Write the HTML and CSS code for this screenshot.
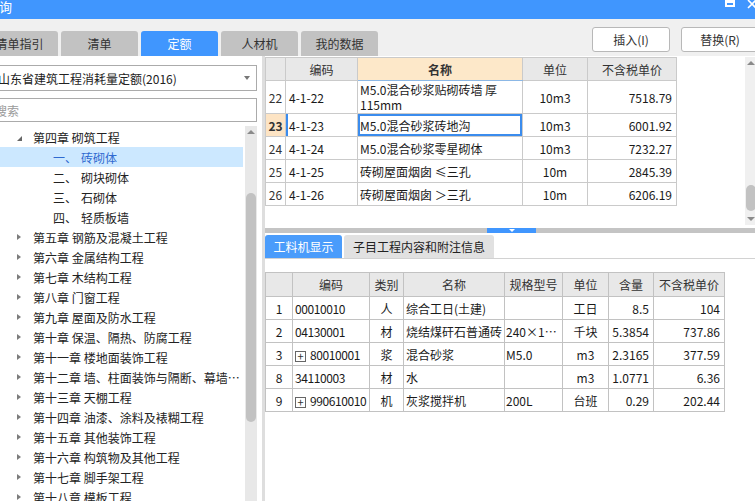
FILE: index.html
```html
<!DOCTYPE html>
<html lang="zh-CN">
<head>
<meta charset="utf-8">
<title>定额查询</title>
<link rel="stylesheet" href="styles.css">
</head>
<body>
<div class="window">
  <div class="titlebar">
    <span class="title">查询</span>
    <div class="win-ctrls">
      <span class="max-icon"></span>
      <svg class="close-icon" width="10" height="9" viewBox="0 0 10 9"><path d="M1 0 L9 8 M9 0 L1 8" stroke="#fff" stroke-width="1.6" fill="none"/></svg>
    </div>
  </div>

  <div class="toolbar">
    <div class="tabs">
      <div class="tab">清单指引</div>
      <div class="tab">清单</div>
      <div class="tab active">定额</div>
      <div class="tab">人材机</div>
      <div class="tab">我的数据</div>
    </div>
    <div class="actions">
      <button class="btn">插入(I)</button>
      <button class="btn">替换(R)</button>
    </div>
  </div>

  <div class="main">
    <aside class="left">
      <div class="select"><span>山东省建筑工程消耗量定额(2016)</span><span class="caret"></span></div>
      <div class="search">搜索</div>
      <div class="tree-wrap">
        <ul class="tree">
          <li class="node"><span class="arrow open"></span><span class="label">第四章 砌筑工程</span></li>
          <li class="node sub sel"><span class="num">一、</span><span class="label">砖砌体</span></li>
          <li class="node sub"><span class="num">二、</span><span class="label">砌块砌体</span></li>
          <li class="node sub"><span class="num">三、</span><span class="label">石砌体</span></li>
          <li class="node sub"><span class="num">四、</span><span class="label">轻质板墙</span></li>
          <li class="node"><span class="arrow"></span><span class="label">第五章 钢筋及混凝土工程</span></li>
          <li class="node"><span class="arrow"></span><span class="label">第六章 金属结构工程</span></li>
          <li class="node"><span class="arrow"></span><span class="label">第七章 木结构工程</span></li>
          <li class="node"><span class="arrow"></span><span class="label">第八章 门窗工程</span></li>
          <li class="node"><span class="arrow"></span><span class="label">第九章 屋面及防水工程</span></li>
          <li class="node"><span class="arrow"></span><span class="label">第十章 保温、隔热、防腐工程</span></li>
          <li class="node"><span class="arrow"></span><span class="label">第十一章 楼地面装饰工程</span></li>
          <li class="node"><span class="arrow"></span><span class="label">第十二章 墙、柱面装饰与隔断、幕墙工程</span></li>
          <li class="node"><span class="arrow"></span><span class="label">第十三章 天棚工程</span></li>
          <li class="node"><span class="arrow"></span><span class="label">第十四章 油漆、涂料及裱糊工程</span></li>
          <li class="node"><span class="arrow"></span><span class="label">第十五章 其他装饰工程</span></li>
          <li class="node"><span class="arrow"></span><span class="label">第十六章 构筑物及其他工程</span></li>
          <li class="node"><span class="arrow"></span><span class="label">第十七章 脚手架工程</span></li>
          <li class="node"><span class="arrow"></span><span class="label">第十八章 模板工程</span></li>
        </ul>
        <div class="vscroll">
          <span class="sb-up"></span>
          <span class="sb-thumb tall"></span>
        </div>
      </div>
    </aside>

    <section class="right">
      <div class="top-pane">
        <div class="grid-area">
          <table class="grid top-grid">
            <colgroup><col style="width:20px"><col style="width:72px"><col style="width:165px"><col style="width:65px"><col style="width:89px"></colgroup>
            <thead>
              <tr><th></th><th>编码</th><th class="hl">名称</th><th>单位</th><th>不含税单价</th></tr>
            </thead>
            <tbody>
              <tr class="r2"><td class="rn">22</td><td class="code">4-1-22</td><td class="name two"><span class="ln">M5.0混合砂浆贴砌砖墙 厚</span><span class="ln">115mm</span></td><td class="c">10m3</td><td class="r">7518.79</td></tr>
              <tr class="cur"><td class="rn">23</td><td class="code">4-1-23</td><td class="name focus">M5.0混合砂浆砖地沟</td><td class="c">10m3</td><td class="r">6001.92</td></tr>
              <tr><td class="rn">24</td><td class="code">4-1-24</td><td class="name">M5.0混合砂浆零星砌体</td><td class="c">10m3</td><td class="r">7232.27</td></tr>
              <tr><td class="rn">25</td><td class="code">4-1-25</td><td class="name">砖砌屋面烟囱 ≤三孔</td><td class="c">10m</td><td class="r">2845.39</td></tr>
              <tr><td class="rn">26</td><td class="code">4-1-26</td><td class="name">砖砌屋面烟囱 ＞三孔</td><td class="c">10m</td><td class="r">6206.19</td></tr>
            </tbody>
          </table>
        </div>
        <div class="vbar">
          <span class="sb-up"></span>
          <span class="sb-fill"></span>
          <span class="sb-thumb short"></span>
          <span class="sb-down"></span>
        </div>
      </div>

      <div class="splitter"><span class="handle"></span></div>

      <div class="subtabs">
        <div class="stab active">工料机显示</div>
        <div class="stab wide">子目工程内容和附注信息</div>
      </div>

      <div class="bottom-pane">
        <table class="grid bottom-grid">
          <colgroup><col style="width:27px"><col style="width:77px"><col style="width:34px"><col style="width:101px"><col style="width:58px"><col style="width:46px"><col style="width:45px"><col style="width:71px"></colgroup>
          <thead>
            <tr><th></th><th>编码</th><th>类别</th><th>名称</th><th>规格型号</th><th>单位</th><th>含量</th><th>不含税单价</th></tr>
          </thead>
          <tbody>
            <tr><td class="c">1</td><td class="code">00010010</td><td class="c">人</td><td class="name">综合工日(土建)</td><td></td><td class="c">工日</td><td class="r">8.5</td><td class="r">104</td></tr>
            <tr><td class="c">2</td><td class="code">04130001</td><td class="c">材</td><td class="name">烧结煤矸石普通砖</td><td class="spec">240×1…</td><td class="c">千块</td><td class="r">5.3854</td><td class="r">737.86</td></tr>
            <tr><td class="c">3</td><td class="code"><span class="plus">+</span>80010001</td><td class="c">浆</td><td class="name">混合砂浆</td><td class="spec">M5.0</td><td class="c">m3</td><td class="r">2.3165</td><td class="r">377.59</td></tr>
            <tr><td class="c">8</td><td class="code">34110003</td><td class="c">材</td><td class="name">水</td><td></td><td class="c">m3</td><td class="r">1.0771</td><td class="r">6.36</td></tr>
            <tr><td class="c">9</td><td class="code"><span class="plus">+</span>990610010</td><td class="c">机</td><td class="name">灰浆搅拌机</td><td class="spec">200L</td><td class="c">台班</td><td class="r">0.29</td><td class="r">202.44</td></tr>
          </tbody>
        </table>
      </div>
    </section>
  </div>
</div>
</body>
</html>
```

FILE: styles.css
```css
* { box-sizing: border-box; }

html, body {
  margin: 0;
  height: 100%;
  overflow: hidden;
  background: #fff;
}

body {
  font-family: "Noto Sans CJK SC", "Noto Sans", sans-serif;
  font-size: 12px;
  color: #222;
}

.window {
  width: 795px;
  height: 501px;
  margin-left: -20px;
  display: flex;
  flex-direction: column;
}

/* title bar */
.titlebar {
  height: 19px;
  flex: none;
  background: #4096fe;
  color: #fff;
  display: flex;
  align-items: flex-start;
  justify-content: space-between;
}

.title {
  font-size: 13px;
  line-height: 13px;
  padding-left: 6px;
}

.win-ctrls {
  display: flex;
  align-items: flex-start;
  gap: 12px;
  margin-right: 18px;
}

.max-icon {
  width: 10px;
  height: 7px;
  border: 2px solid #fff;
  border-top-width: 3px;
}

.close-icon { display: block; }

/* toolbar */
.toolbar {
  height: 37px;
  flex: none;
  background: #f0f0f0;
  display: flex;
  align-items: flex-end;
}

.tabs {
  display: flex;
  gap: 3px;
  padding-left: 1px;
}

.tab {
  width: 77px;
  height: 25px;
  background: #c2c2c2;
  border-radius: 3px 3px 0 0;
  display: flex;
  align-items: center;
  justify-content: center;
  color: #333;
}

.tab.active {
  background: #4096fe;
  color: #fff;
}

.actions {
  margin-left: auto;
  margin-bottom: 4px;
  padding-right: 16px;
  display: flex;
  gap: 11px;
}

.btn {
  width: 78px;
  height: 25px;
  background: #fff;
  border: 1px solid #b8b8b8;
  border-radius: 3px;
  font: inherit;
  color: #333;
  padding: 0;
}

/* main */
.main {
  flex: 1;
  min-height: 0;
  display: flex;
}

.left {
  width: 282px;
  flex: none;
  display: flex;
  flex-direction: column;
}

.select {
  margin: 9px 5px 0 10px;
  height: 26px;
  border: 1px solid #ababab;
  display: flex;
  align-items: center;
  padding: 0 6px 0 7px;
  color: #222;
}

.caret {
  margin-left: auto;
  width: 0;
  height: 0;
  border-left: 3.5px solid transparent;
  border-right: 3.5px solid transparent;
  border-top: 4px solid #777;
}

.search {
  margin: 7px 5px 0 10px;
  height: 24px;
  border: 1px solid #ababab;
  padding-left: 4px;
  display: flex;
  align-items: center;
  color: #9a9a9a;
}

.tree-wrap {
  flex: 1;
  min-height: 0;
  margin-top: 4px;
  display: flex;
  padding-right: 5px;
}

.tree {
  flex: 1;
  min-width: 0;
  list-style: none;
  margin: 0;
  padding: 1px 2px 0 0;
  overflow: hidden;
}

.node {
  height: 20px;
  display: flex;
  align-items: center;
  padding-left: 37px;
  white-space: nowrap;
  color: #222;
}

.node .label {
  overflow: hidden;
  text-overflow: ellipsis;
  min-width: 0;
}

.arrow {
  width: 16px;
  flex: none;
  height: 20px;
  display: flex;
  align-items: center;
}

.arrow::before {
  content: "";
  width: 0;
  height: 0;
  border-left: 4px solid #7c7c7c;
  border-top: 3.5px solid transparent;
  border-bottom: 3.5px solid transparent;
}

.arrow.open::before {
  border-left: 5px solid transparent;
  border-top: 0;
  border-bottom: 5px solid #666;
  margin-top: 3px;
}

.node.sub { padding-left: 73px; }

.num {
  width: 28px;
  flex: none;
}

.node.sel {
  background: #cce8ff;
  color: #2f6ad0;
}

.vscroll {
  width: 12px;
  flex: none;
  background: #e8e8e8;
  display: flex;
  flex-direction: column;
  align-items: center;
}

.sb-up, .sb-down {
  flex: none;
  width: 0;
  height: 0;
  border-left: 4px solid transparent;
  border-right: 4px solid transparent;
}

.sb-up {
  border-bottom: 4px solid #8a8a8a;
  margin: 4px 0;
}

.sb-down {
  border-top: 4px solid #8a8a8a;
  margin: 4px 0;
}

.sb-thumb {
  width: 10px;
  background: #c2c2c2;
  border-radius: 5px;
  flex: none;
}

.sb-thumb.tall {
  margin-top: 55px;
  height: 229px;
}

.sb-thumb.short {
  height: 26px;
  margin-bottom: 2px;
}

.sb-fill { flex: 1; }

/* right side */
.right {
  flex: 1;
  min-width: 0;
  display: flex;
  flex-direction: column;
  border-left: 3px solid #dedede;
}

.top-pane {
  height: 172px;
  flex: none;
  display: flex;
  align-items: flex-start;
  padding-top: 1px;
  padding-right: 18px;
}

.grid-area { flex: 1; }

.vbar {
  width: 12px;
  height: 168px;
  flex: none;
  background: #f0f0f0;
  display: flex;
  flex-direction: column;
  align-items: center;
}

.grid {
  border-collapse: collapse;
  table-layout: fixed;
}

.grid th, .grid td {
  border: 1px solid #cacaca;
  padding: 0 3px;
  white-space: nowrap;
  overflow: hidden;
  font-weight: normal;
  color: #1a1a1a;
}

.grid th {
  background: #e8e8e8;
  color: #333;
  text-align: center;
}

.top-grid { width: 411px; }
.top-grid thead tr { height: 23px; }
.top-grid tbody tr { height: 23px; }
.top-grid tbody tr.r2 { height: 33px; }

.top-grid th.hl {
  background: #fde8c9;
  font-weight: bold;
  border-bottom-color: #8cb8e6;
}

.grid td.rn {
  text-align: center;
  color: #333;
  padding: 0;
}

.grid td.code { padding-left: 3px; }
.grid td.name { padding-left: 2px; }
.grid td.name.two { padding-top: 0; padding-bottom: 0; }
.grid td.name .ln {
  display: block;
  height: 15px;
  line-height: 15px;
  overflow: hidden;
}
.grid td.c { text-align: center; }
.grid td.r { text-align: right; padding-right: 4px; }

.top-grid tr.cur td.rn {
  background: #fde4c4;
  font-weight: bold;
}

.top-grid tr.cur td.code { box-shadow: inset 2px 0 #3b8ced; }
.top-grid td.focus { box-shadow: inset 0 0 0 2px #3b8ced; }

.splitter {
  height: 5px;
  flex: none;
  background: #c4c4c4;
  display: flex;
}

.handle {
  margin-left: 222px;
  width: 49px;
  background: #4096fe;
  display: flex;
  justify-content: center;
}

.handle::before {
  content: "";
  width: 0;
  height: 0;
  border-left: 3px solid transparent;
  border-right: 3px solid transparent;
  border-top: 3px solid #fff;
  margin-top: 1px;
}

.subtabs {
  margin-top: 2px;
  height: 24px;
  flex: none;
  display: flex;
  gap: 2px;
  border-bottom: 1px solid #d2d2d2;
}

.stab {
  width: 77px;
  height: 23px;
  background: #e1e1e1;
  display: flex;
  align-items: center;
  justify-content: center;
  color: #222;
  border-radius: 3px 3px 0 0;
}

.stab.active {
  background: #4a9cfb;
  color: #fff;
}

.stab.wide { width: 150px; }

.bottom-pane {
  flex: 1;
  padding-top: 13px;
}

.bottom-grid { width: 459px; }
.bottom-grid thead tr { height: 24px; }
.bottom-grid tbody tr { height: 23px; }
.bottom-grid th, .bottom-grid td { border-color: #c2c2c2; }
.bottom-grid td.spec { padding-left: 1px; }
.bottom-grid td.code { letter-spacing: -0.4px; padding-left: 2px; }

.plus {
  display: inline-flex;
  align-items: center;
  justify-content: center;
  width: 11px;
  height: 11px;
  border: 1px solid #666;
  font-size: 11px;
  line-height: 1;
  letter-spacing: 0;
  margin-right: 4px;
  vertical-align: -1px;
  color: #333;
}
```
